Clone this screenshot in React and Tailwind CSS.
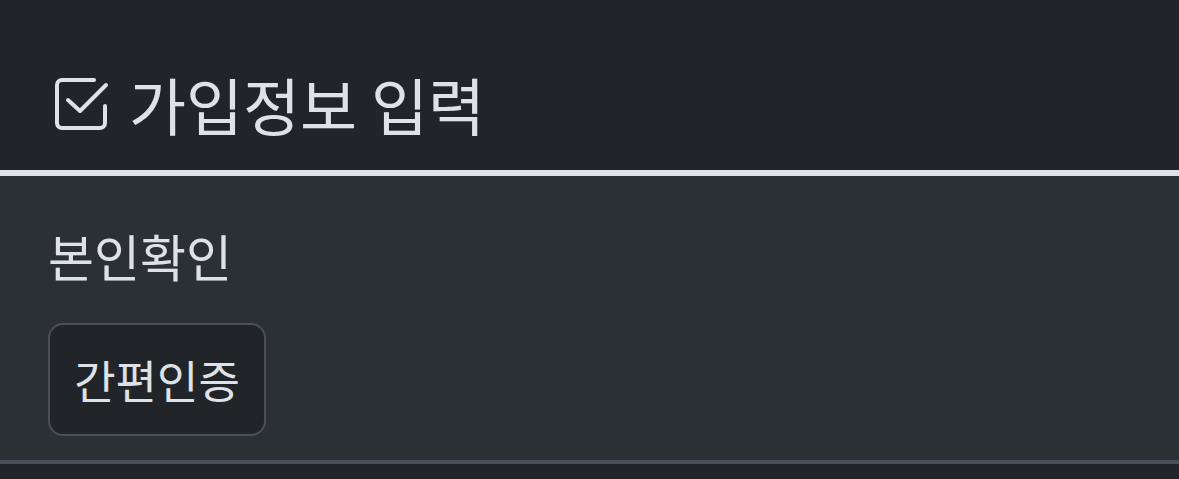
export default function App() {
  return (
    <div
      className="w-[1179px] h-[479px] bg-[#212529] text-[#dee2e6] overflow-hidden"
      style={{ fontFamily: '"Noto Sans CJK KR", "Noto Sans", sans-serif' }}
    >
      <header className="h-[176px] flex items-center pl-[53px] pt-[38px] gap-[20px] border-b-[6px] border-[#dee2e6]">
        <svg width="56" height="56" viewBox="0 0 56 56" fill="none" stroke="currentColor" strokeWidth="4" strokeLinecap="round" strokeLinejoin="round">
          <path d="M41 4H9a5 5 0 0 0-5 5v38a5 5 0 0 0 5 5h38a5 5 0 0 0 5-5V30" />
          <path d="M15 24 27 35 53 9" />
        </svg>
        <h1 className="text-[62px] leading-none font-normal">가입정보 입력</h1>
      </header>
      <section className="bg-[#2b3035] h-[288px] px-[48px] pt-[46px] border-b-[4px] border-[#495057]">
        <div className="text-[50px] leading-[66px]">본인확인</div>
        <button className="mt-[35px] w-[218px] h-[113px] rounded-[15px] border-2 border-[#495057] bg-[#212529] text-[45px] text-[#dee2e6]">
          간편인증
        </button>
      </section>
    </div>
  );
}
